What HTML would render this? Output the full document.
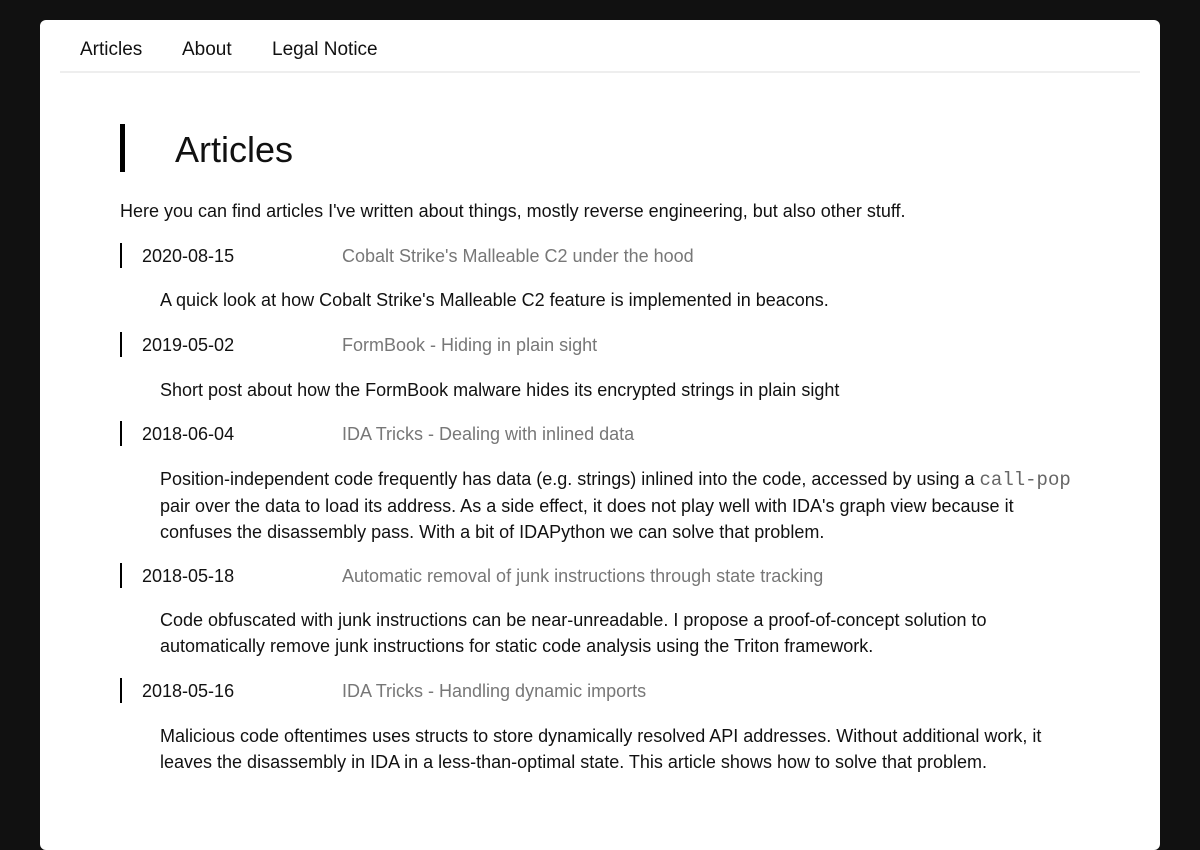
<!DOCTYPE html>
<html><head><meta charset="utf-8"><style>
html,body{margin:0;padding:0;background:#111;width:1200px;height:833px;overflow:hidden}
body{font-family:"Liberation Sans",sans-serif;color:#111}
.card{position:absolute;left:40px;top:20px;width:1120px;height:830px;background:#fff;border-radius:6px}
.nav{position:absolute;top:18px;font-size:19px;line-height:24px}
.hr{position:absolute;left:20px;top:51px;width:1080px;height:2px;background:#eee}
.a{position:absolute;font-size:18px;line-height:26px;white-space:nowrap}
.bar{position:absolute;left:80px;width:2px;height:25px;background:#000}
.t{color:#777}
code{font-family:"Liberation Mono",monospace;color:#666;font-size:19px}
</style></head><body>
<div class="card">
<div class="nav" style="left:40px">Articles</div>
<div class="nav" style="left:142px">About</div>
<div class="nav" style="left:232px">Legal Notice</div>
<div class="hr"></div>
<div style="position:absolute;left:80px;top:104px;width:5px;height:48px;background:#000"></div>
<div class="a" style="left:135px;top:108px;font-size:36px;line-height:44px">Articles</div>
<div class="a" style="left:80px;top:178px">Here you can find articles I've written about things, mostly reverse engineering, but also other stuff.</div>

<div class="bar" style="top:223px"></div>
<div class="a" style="left:102px;top:223px">2020-08-15</div>
<div class="a t" style="left:302px;top:223px">Cobalt Strike's Malleable C2 under the hood</div>
<div class="a" style="left:120px;top:267px">A quick look at how Cobalt Strike's Malleable C2 feature is implemented in beacons.</div>

<div class="bar" style="top:312px"></div>
<div class="a" style="left:102px;top:312px">2019-05-02</div>
<div class="a t" style="left:302px;top:312px">FormBook - Hiding in plain sight</div>
<div class="a" style="left:120px;top:357px">Short post about how the FormBook malware hides its encrypted strings in plain sight</div>

<div class="bar" style="top:401px"></div>
<div class="a" style="left:102px;top:401px">2018-06-04</div>
<div class="a t" style="left:302px;top:401px">IDA Tricks - Dealing with inlined data</div>
<div class="a" style="left:120px;top:446px">Position-independent code frequently has data (e.g. strings) inlined into the code, accessed by using a <code>call-pop</code><br>pair over the data to load its address. As a side effect, it does not play well with IDA's graph view because it<br>confuses the disassembly pass. With a bit of IDAPython we can solve that problem.</div>

<div class="bar" style="top:543px"></div>
<div class="a" style="left:102px;top:543px">2018-05-18</div>
<div class="a t" style="left:302px;top:543px">Automatic removal of junk instructions through state tracking</div>
<div class="a" style="left:120px;top:587px">Code obfuscated with junk instructions can be near-unreadable. I propose a proof-of-concept solution to<br>automatically remove junk instructions for static code analysis using the Triton framework.</div>

<div class="bar" style="top:658px"></div>
<div class="a" style="left:102px;top:658px">2018-05-16</div>
<div class="a t" style="left:302px;top:658px">IDA Tricks - Handling dynamic imports</div>
<div class="a" style="left:120px;top:703px">Malicious code oftentimes uses structs to store dynamically resolved API addresses. Without additional work, it<br>leaves the disassembly in IDA in a less-than-optimal state. This article shows how to solve that problem.</div>
</div>
</body></html>
